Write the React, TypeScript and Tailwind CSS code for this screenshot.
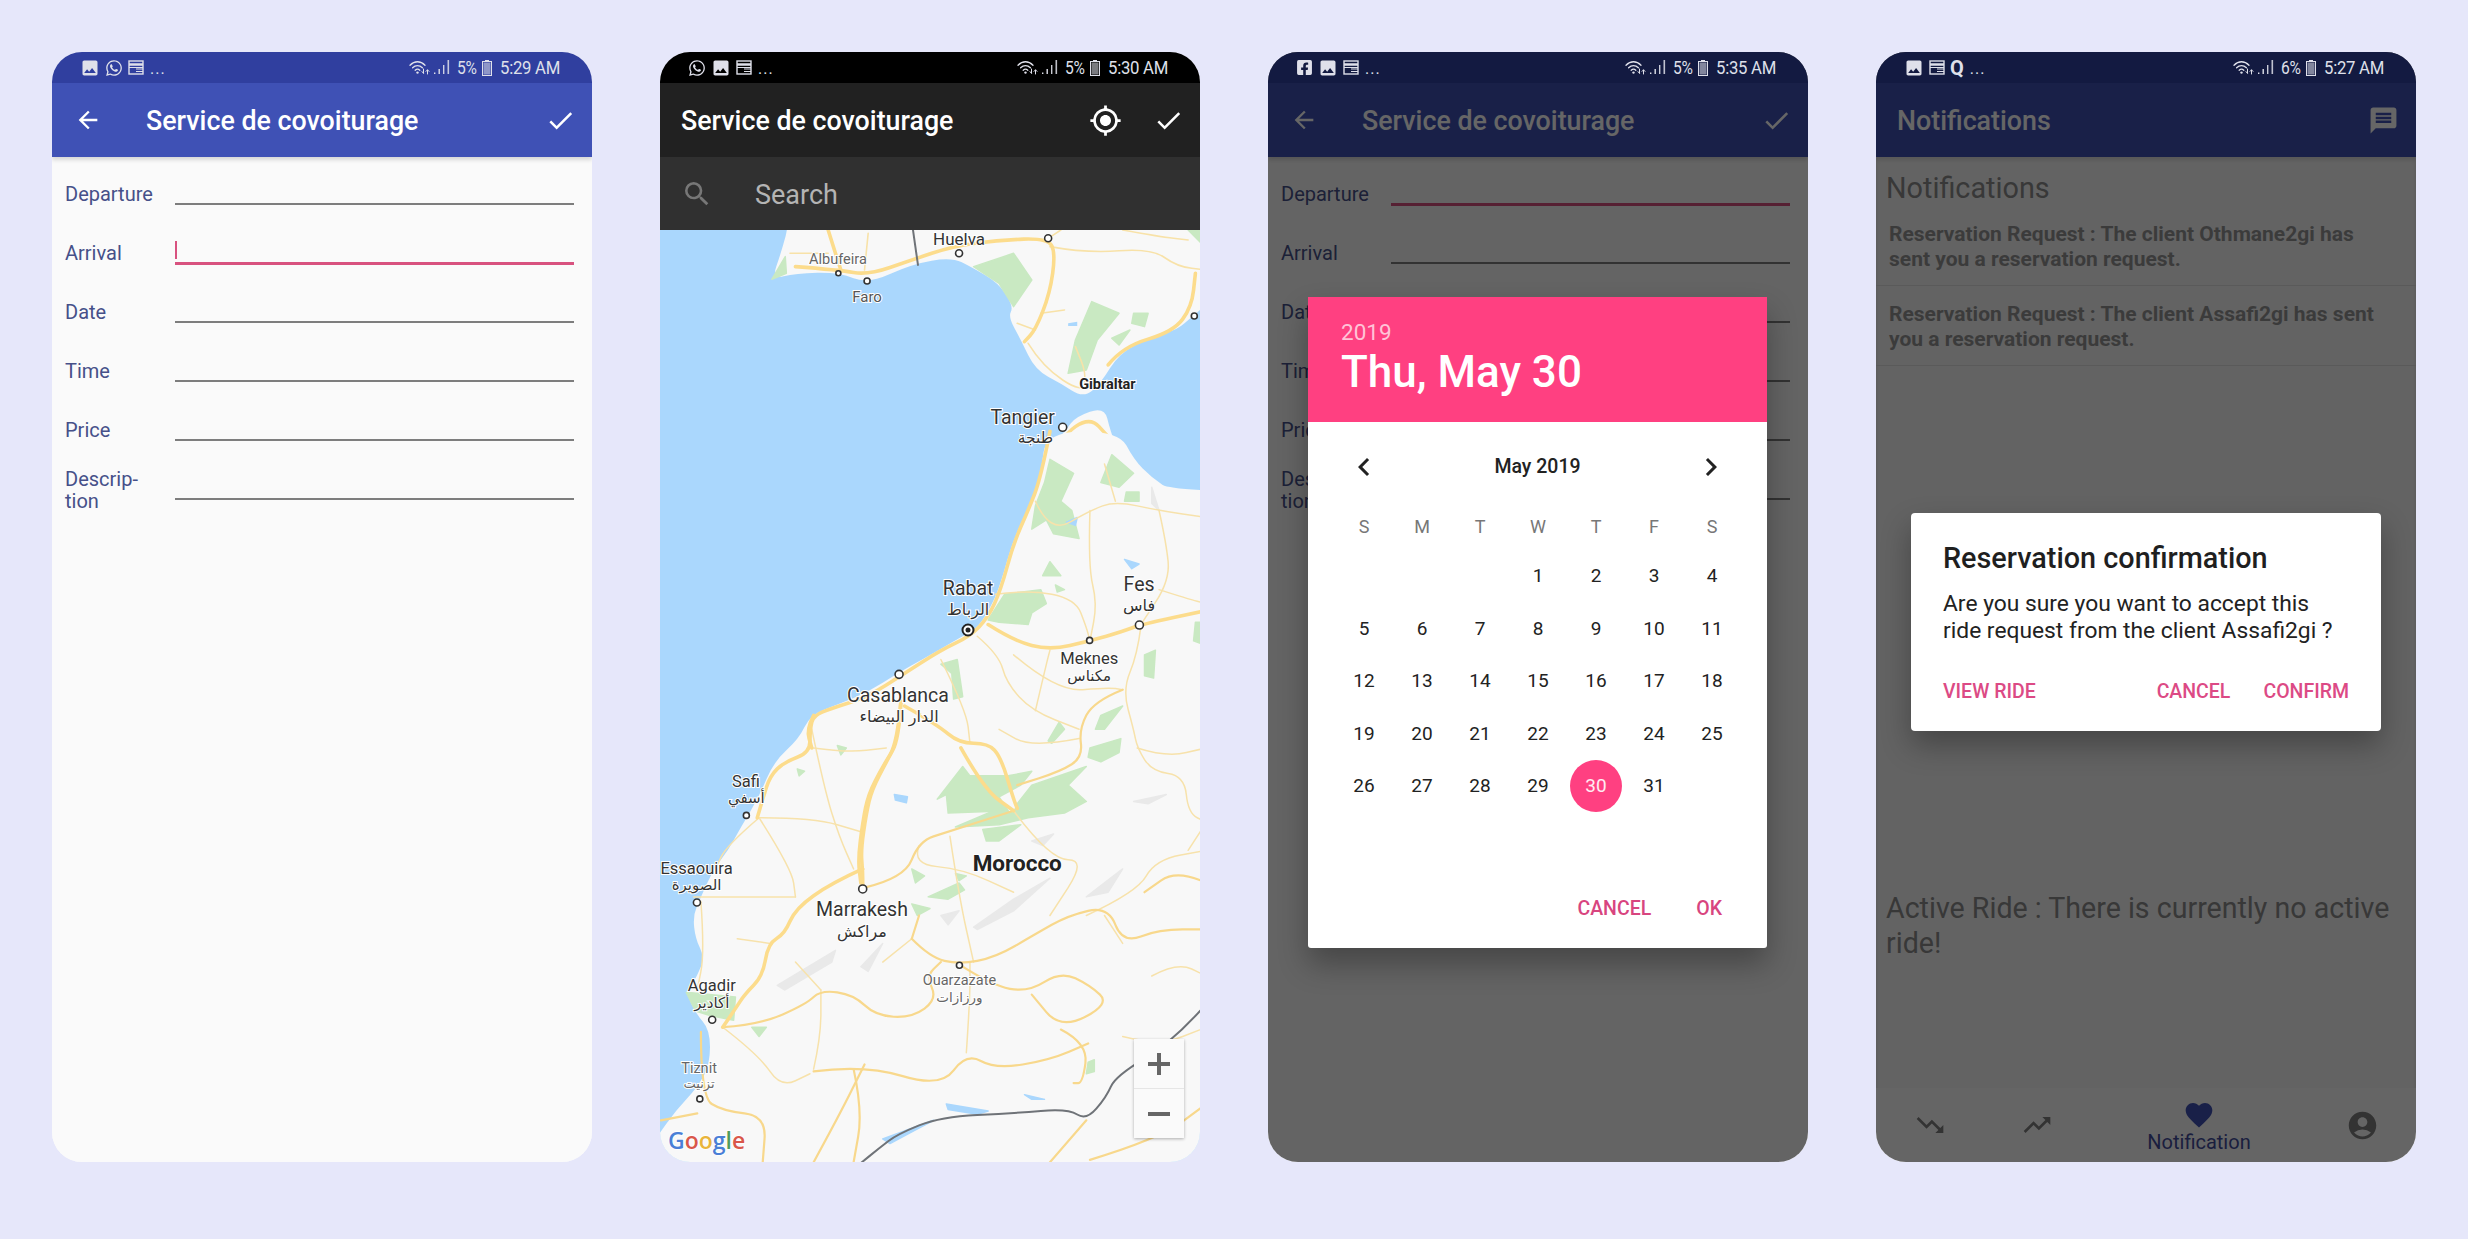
import type { ReactNode } from "react";
import {
  MdAccountCircle,
  MdArrowBack,
  MdChevronLeft,
  MdChevronRight,
  MdDone,
  MdFavorite,
  MdGpsFixed,
  MdImage,
  MdMessage,
  MdSearch,
  MdTrendingDown,
  MdTrendingUp,
} from "react-icons/md";
import { FaFacebookSquare, FaWhatsapp } from "react-icons/fa";

// status bar glyphs
function WebIcon() {
  return (
    <svg width="16" height="15" viewBox="0 0 16 15" fill="none" stroke="currentColor">
      <rect x="1" y="1" width="14" height="13" strokeWidth="1.4" />
      <path d="M1 4.5h14" strokeWidth="2.4" />
      <path d="M8 9h7M8 11.5h7M1 7.5h14" strokeWidth="1" />
    </svg>
  );
}

function WifiIcon() {
  return (
    <svg width="22" height="16" viewBox="0 0 22 16" fill="none" stroke="currentColor" strokeWidth="1.3" strokeLinecap="round">
      <path d="M1 5.2C5.5 .6 11.5 .6 16 5.2" />
      <path d="M3.6 7.8C6.6 4.8 10.4 4.8 13.4 7.8" />
      <path d="M6.2 10.2C7.8 8.8 9.2 8.8 10.8 10.2" />
      <circle cx="8.5" cy="12.6" r="1.2" fill="currentColor" stroke="none" />
      <path d="M14.5 9v4M13 11.6l1.5 1.8M18.5 14V10M17 11.4l1.5-1.6 1.5 1.6" strokeWidth="1" />
    </svg>
  );
}

function SignalIcon() {
  return (
    <svg width="16" height="15" viewBox="0 0 16 15" fill="currentColor">
      <rect x="0" y="12.5" width="1.4" height="1.5" />
      <rect x="4.5" y="9" width="1.4" height="5" />
      <rect x="9" y="5" width="1.4" height="9" opacity="0.9" />
      <rect x="13.5" y="0" width="1.6" height="14" opacity="0.85" />
    </svg>
  );
}

function BatteryIcon() {
  return (
    <svg width="10" height="16" viewBox="0 0 10 16" fill="currentColor">
      <rect x="3" y="0" width="4" height="2" />
      <rect x="0.5" y="1.5" width="9" height="14" fill="none" stroke="currentColor" />
      <rect x="1.5" y="2.5" width="7" height="12" opacity="0.55" />
    </svg>
  );
}

function StatusBar({
  bg,
  icons,
  pct,
  time,
}: {
  bg: string;
  icons: ReactNode[];
  pct: string;
  time: string;
}) {
  return (
    <div className={`relative z-30 h-[31px] shrink-0 flex items-center justify-between pl-[28px] pr-[32px] text-[#dfe0ea] ${bg}`}>
      <div className="flex items-center gap-[5px]">
        {icons.map((icon, i) => (
          <span key={i} className="flex items-center">
            {icon}
          </span>
        ))}
        <span className="text-[16px] leading-none ml-[1px] mt-[3px] tracking-[1px]">...</span>
      </div>
      <div className="flex items-center text-[19px] leading-none tracking-[-0.3px]">
        <WifiIcon />
        <span className="ml-[3px]">
          <SignalIcon />
        </span>
        <span className="ml-[7px] w-[20px] scale-x-[0.82] origin-left whitespace-nowrap">{pct}</span>
        <span className="ml-[5px] mr-[8px]">
          <BatteryIcon />
        </span>
        <span className="w-[60px] scale-x-[0.88] origin-left whitespace-nowrap">{time}</span>
      </div>
    </div>
  );
}

const imageIcon = <MdImage size={20} />;
const webIcon = <WebIcon />;
const whatsappIcon = <FaWhatsapp size={18} />;

function ServiceAppBar() {
  return (
    <div className="h-[74px] shrink-0 flex items-center bg-[#3f51b5] text-white pl-[22px] pr-[16px] shadow-[0_3px_4px_rgba(0,0,0,0.14)] relative z-10">
      <MdArrowBack size={28} />
      <div className="ml-[44px] flex-1 text-[26.8px] leading-none font-medium pt-[3px]">Service de covoiturage</div>
      <MdDone size={31} />
    </div>
  );
}

const fields = ["Departure", "Arrival", "Date", "Time", "Price", "Descrip-\ntion"];

function RideForm({ active, cursor }: { active: number; cursor?: boolean }) {
  return (
    <div className="flex-1 bg-[#fafafa] flex flex-col gap-[11px] pl-[13px] pr-[18px]">
      {fields.map((label, i) => (
        <div key={label} className="h-[48px] flex items-end">
          <div
            className={`w-[110px] shrink-0 text-[20px] leading-[22px] text-[#465089] whitespace-pre-line ${
              i === 5 ? "-mb-[12px]" : ""
            }`}
          >
            {label}
          </div>
          <div
            className={`flex-1 ${
              i === active ? "border-b-[3px] border-[#d8527f] -mb-[1px]" : "border-b-2 border-[#7d7d7d]"
            }`}
          >
            {cursor && i === active && <div className="w-[2px] h-[18px] mb-[3px] bg-[#d8527f]" />}
          </div>
        </div>
      ))}
    </div>
  );
}

// rounds a traced polyline through the midpoints of its segments
function smooth(d: string, closed = false) {
  const pts = d
    .replace(/[MLZ]/g, " ")
    .trim()
    .split(/\s+/)
    .map((p) => p.split(",").map(Number));
  const mid = (a: number[], b: number[]) => `${(a[0] + b[0]) / 2},${(a[1] + b[1]) / 2}`;
  if (closed) {
    let out = `M${mid(pts[pts.length - 1], pts[0])}`;
    pts.forEach((p, i) => {
      out += ` Q${p[0]},${p[1]} ${mid(p, pts[(i + 1) % pts.length])}`;
    });
    return out + " Z";
  }
  let out = `M${pts[0][0]},${pts[0][1]}`;
  for (let i = 1; i < pts.length - 1; i++) {
    out += ` Q${pts[i][0]},${pts[i][1]} ${mid(pts[i], pts[i + 1])}`;
  }
  const last = pts[pts.length - 1];
  return `${out} L${last[0]},${last[1]}`;
}

// map drawing, traced in the coordinates of two crops of the reference
const north = "translate(-10,-190) scale(0.3636,0.3333)";
const south = "translate(-10,220) scale(0.3636,0.4655)";

const landNorth = [
  "M385,200 L385,540 L360,640 L335,718 L400,700 L520,697 L600,732 L720,672 L830,652 L885,682 L960,730 L1000,800 L985,830 L1020,900 L1060,990 L1130,1030 L1192,1074 L1240,1030 L1290,940 L1380,890 L1450,870 L1490,830 L1700,640 L1900,200 Z",
  "M1085,1290 L1110,1210 L1145,1170 L1170,1130 L1250,1100 L1265,1170 L1305,1290 Z",
];
const greenNorth = [
  "M890,680 L1000,640 L1050,720 L1000,800 L960,730 Z",
  "M1215,785 L1290,820 L1230,900 L1200,990 L1150,1000 L1170,900 Z",
  "M1330,820 L1370,820 L1360,860 L1325,850 Z",
  "M1270,895 L1320,870 L1290,915 Z",
  "M335,718 L372,650 L375,700 Z",
  "M1190,1180 L1230,1230 L1190,1235 Z",
  "M1480,570 L1530,570 L1530,625 Z",
];
const bigNorth = [
  "M400,680 L520,690 L600,705 L720,660 L830,620 L960,600 L1095,595 L1115,640 L1100,760 L1060,870 L1030,905",
  "M490,570 L510,640 L525,690",
  "M1260,975 L1300,920 L1440,875 L1490,800 L1500,700",
  "M1090,1290 L1130,1190 L1210,1130 L1260,1190",
];
const thinNorth = [
  "M1010,850 L1060,870",
  "M1100,620 L1200,640 L1380,625 L1450,680 L1530,690",
  "M1040,910 L1080,980 L1190,1060 L1200,1000 L1170,920",
  "M1075,820 L1140,810",
  "M1150,1190 L1200,1240 L1270,1215",
  "M600,580 L590,690",
  "M385,640 L490,640",
  "M1130,570 L1095,595",
  "M1300,570 L1400,590 L1480,600",
];

const landSouth =
  "M1090,-40 L1075,50 L1050,110 L1000,190 L965,285 L945,325 L905,380 L860,400 L760,445 L680,480 L600,520 L520,545 L440,570 L410,620 L340,670 L300,745 L250,810 L215,860 L175,900 L140,960 L118,1000 L125,1050 L150,1090 L130,1130 L100,1165 L125,1210 L165,1245 L165,1320 L130,1370 L70,1420 L20,1475 L-100,1600 L-100,2400 L2400,2400 L2400,105 L1440,90 L1380,60 L1330,20 L1290,-40 Z";
const greySouth = [
  "M890,1025 L1000,965 L1100,920 L1000,990 L900,1030 Z",
  "M350,1150 L510,1075 L500,1100 L370,1160 Z",
  "M580,1110 L640,1060 L600,1120 Z",
  "M800,1000 L850,990 L820,1020 Z",
  "M1200,960 L1300,900 L1260,950 Z",
  "M1330,755 L1420,740 L1370,760 Z",
  "M1380,80 L1400,130 L1380,115 Z",
  "M1050,840 L1110,825 L1080,850 Z",
];
const greenSouth = [
  "M1100,20 L1165,50 L1130,110 L1160,130 L1180,190 L1110,180 L1090,150 L1050,170 L1060,120 L1085,70 Z",
  "M1270,10 L1330,50 L1290,80 L1240,70 Z",
  "M1310,90 L1345,90 L1345,110 L1305,110 Z",
  "M1080,270 L1100,240 L1130,270 Z",
  "M1115,290 L1140,300 L1120,305 Z",
  "M930,365 L975,310 L1075,300 L1090,330 L1050,350 L1040,375 L960,370 Z",
  "M800,460 L845,450 L860,530 L835,535 L830,480 Z",
  "M1095,625 L1125,585 L1140,600 L1105,630 Z",
  "M1240,570 L1300,550 L1250,600 L1225,600 Z",
  "M1210,640 L1295,620 L1290,650 L1240,670 L1205,660 Z",
  "M790,750 L860,680 L880,700 L985,700 L1050,690 L1020,720 L960,745 L985,775 L820,780 L815,740 Z",
  "M840,810 L960,770 L1000,780 L1010,760 L1050,720 L1200,680 L1150,720 L1200,755 L1140,780 L1040,790 L960,805 Z",
  "M915,815 L1020,805 L960,840 L925,840 Z",
  "M765,960 L850,930 L865,945 L820,965 Z",
  "M720,900 L755,915 L730,930 Z",
  "M840,910 L870,915 L850,925 Z",
  "M100,1165 L235,1175 L230,1225 L165,1215 L125,1205 Z",
  "M280,1240 L320,1240 L300,1260 Z",
  "M1205,1315 L1222,1310 L1222,1335 L1200,1340 Z",
  "M1360,440 L1390,430 L1385,490 L1360,485 Z",
  "M1500,370 L1530,370 L1530,420 L1495,410 Z",
  "M515,635 L540,640 L525,655 Z",
  "M405,685 L425,690 L410,700 Z",
  "M720,975 L770,985 L735,1000 Z",
];
const waterSouth = [
  "M672,740 L708,745 L705,758 L675,752 Z",
  "M815,1405 L930,1420 L900,1427 L820,1417 Z",
  "M1305,235 L1345,245 L1325,255 Z",
  "M1145,155 L1175,145 L1170,162 Z",
  "M1030,1385 L1085,1395 L1050,1395 Z",
  "M640,1480 L780,1440 L720,1465 L660,1490 Z",
];
const thinSouth = [
  "M1210,130 L1205,250 L1230,330 L1210,410",
  "M1060,110 L1100,180 L1210,130 L1280,110 L1400,130 L1530,145",
  "M1250,30 L1280,110",
  "M1400,130 L1420,200 L1430,280 L1350,375",
  "M950,310 L1040,300 L1170,320 L1200,380 L1210,410",
  "M1350,380 L1340,440 L1300,515 L1330,600 L1340,640 L1380,690 L1470,700 L1480,780 L1530,800",
  "M900,400 L960,440 L980,500 L1050,560 L1180,600",
  "M800,450 L870,560 L880,630",
  "M445,600 L480,730 L520,830 L560,900",
  "M300,790 L450,790 L580,820",
  "M300,790 L390,900 L400,960",
  "M300,790 L210,850 L180,900",
  "M120,960 L240,960 L400,960",
  "M140,970 L150,1080 L130,1160",
  "M825,830 L850,960 L890,1100",
  "M1000,775 L1100,880 L1200,880 L1100,1000",
  "M1200,1000 L1340,950 L1390,880 L1530,860",
  "M1530,800 L1480,860",
  "M1300,1060 L1250,1000",
  "M450,1330 L470,1260 L470,1160",
  "M200,1240 L300,1300 L360,1370 L440,1340",
  "M740,850 L720,890 L860,900 L1000,950",
  "M1180,620 L1050,640 L960,600",
  "M1060,560 L1090,460 L1100,430",
  "M450,640 L540,650 L650,640",
  "M870,1295 L880,1180 L880,1100",
  "M1000,440 L1120,520 L1260,510 L1300,515",
  "M1400,300 L1480,320 L1530,330",
  "M1340,640 L1420,660 L1530,640",
  "M240,1050 L330,1060",
  "M400,1100 L470,1160",
  "M640,1100 L720,1050",
  "M1380,1130 L1450,1100 L1530,1130",
  "M1300,1260 L1400,1280 L1530,1240",
];
const midSouth = [
  "M720,1050 L770,1090 L850,1105 L950,1090 L1060,1040 L1150,1000 L1260,980 L1300,1060 L1400,1030 L1530,1030",
  "M740,1000 L720,1050",
  "M590,940 L700,920 L740,840 L820,820 L1000,775",
  "M200,1240 L300,1235 L430,1190 L470,1160 L560,1170 L620,1215 L720,1220 L790,1180 L760,1130 L800,1100",
  "M850,1105 L940,1150 L1040,1165 L1130,1120 L1210,1150 L1265,1190 L1130,1245 L1050,1170",
  "M1130,1245 L1205,1275 L1190,1360 L1165,1360",
  "M450,1335 L590,1320 L800,1370 L870,1295 L950,1330 L1100,1310 L1205,1275",
  "M1300,515 L1220,540 L1180,600 L1190,660 L1130,690 L1010,720",
  "M140,1250 L140,1390 L200,1420 L320,1430 L310,1530",
  "M30,1440 L130,1425",
  "M560,1330 L585,1420 L560,1530",
  "M1210,1525 L1400,1480 L1530,1405",
  "M1100,1530 L1200,1440",
  "M1530,930 L1450,900 L1360,950",
  "M450,1530 L520,1430 L590,1320",
];
const bigSouth = [
  "M1100,-40 L1075,60 L1040,130 L1000,200 L965,300 L930,360 L880,400 L800,430 L700,480 L600,530 L500,555 L450,570 L440,600 L440,650 L370,670 L330,700 L310,750 L295,790",
  "M690,540 L685,620 L650,670 L610,730 L595,780 L580,860 L585,905 L585,940",
  "M690,540 L680,630 L640,680 L600,740 L585,800 L572,880 L580,930",
  "M585,900 L500,930 L400,985 L370,1040 L325,1060 L310,1130 L260,1170 L235,1200 L200,1240",
  "M930,375 L1000,410 L1100,430 L1210,410 L1300,390 L1350,375 L1530,345",
  "M700,550 L790,590 L850,630 L930,630 L965,660 L1000,750 L1010,770",
  "M855,640 L920,730 L1000,775",
  "M450,570 L430,600 L445,640",
];

type Pin = [number, number, number];
const pinsNorth: Pin[] = [
  [850, 640, 3.5],
  [1095, 595, 3.5],
  [518, 700, 2.5],
  [597, 723, 3],
  [1497, 828, 3],
  [1135, 1162, 4],
];
const pinsSouth: Pin[] = [
  [1346, 376, 4],
  [1209, 409, 3],
  [685, 482, 4],
  [265, 785, 3],
  [129, 972, 3.5],
  [585, 943, 4],
  [851, 1107, 3],
  [171, 1224, 3.5],
  [137, 1394, 3],
];

type Place = [string, number, number, number, string?, boolean?];
const labelsNorth: Place[] = [
  ["Huelva", 850, 598, 17],
  ["Albufeira", 517, 660, 14.5, "#666"],
  ["Faro", 597, 772, 15, "#555"],
  ["Gibraltar", 1258, 1033, 14.5, "#222", true],
  ["Tangier", 1025, 1133, 19.5],
  ["طنجة", 1060, 1195, 15.5],
];
const labelsSouth: Place[] = [
  ["Rabat", 875, 298, 19.5],
  ["الرباط", 875, 342, 16],
  ["Fes", 1345, 290, 19.5],
  ["فاس", 1345, 335, 16],
  ["Meknes", 1208, 448, 16.5],
  ["مكناس", 1208, 485, 15],
  ["Casablanca", 682, 528, 19.5],
  ["الدار البيضاء", 685, 572, 16],
  ["Safi", 264, 712, 16.5],
  ["أسفي", 265, 748, 15],
  ["Essaouira", 128, 898, 16.5],
  ["الصويرة", 128, 935, 15],
  ["Marrakesh", 583, 988, 19.5],
  ["مراكش", 583, 1035, 16],
  ["Morocco", 1010, 887, 22.5, "#222", true],
  ["Ouarzazate", 851, 1140, 14.5, "#666"],
  ["ورزازات", 851, 1175, 13.5, "#666"],
  ["Agadir", 170, 1150, 16.5],
  ["أكادير", 170, 1187, 15],
  ["Tiznit", 135, 1328, 14.5, "#666"],
  ["تزنيت", 135, 1360, 13, "#666"],
];

function Shapes({ items, fill }: { items: string[]; fill: string }) {
  return (
    <>
      {items.map((d) => (
        <path key={d} d={d} fill={fill} stroke={fill} strokeWidth="1.5" strokeLinejoin="round" vectorEffect="non-scaling-stroke" />
      ))}
    </>
  );
}

function Lines({ items, color, width }: { items: string[]; color: string; width: number }) {
  return (
    <>
      {items.map((d) => (
        <path
          key={d}
          d={smooth(d)}
          fill="none"
          stroke={color}
          strokeWidth={width}
          strokeLinejoin="round"
          strokeLinecap="round"
          vectorEffect="non-scaling-stroke"
        />
      ))}
    </>
  );
}

function Pins({ items, sx, sy, dx, dy }: { items: Pin[]; sx: number; sy: number; dx: number; dy: number }) {
  return (
    <>
      {items.map(([x, y, r]) => (
        <circle key={`${x}-${y}`} cx={x * sx + dx} cy={y * sy + dy} r={r} fill="#fff" stroke="#333" strokeWidth="1.6" />
      ))}
    </>
  );
}

function Labels({ items, sx, sy, dx, dy }: { items: Place[]; sx: number; sy: number; dx: number; dy: number }) {
  return (
    <>
      {items.map(([text, x, y, size, color, bold]) => (
        <text
          key={text}
          x={x * sx + dx}
          y={y * sy + dy}
          fontSize={size}
          fill={color ?? "#333"}
          fontWeight={bold ? 700 : 400}
          textAnchor="middle"
          dominantBaseline="central"
          stroke="#fff"
          strokeWidth="2"
          paintOrder="stroke"
          className="font-['Roboto','DejaVu_Sans',sans-serif]"
        >
          {text}
        </text>
      ))}
    </>
  );
}

function MapView() {
  return (
    <div className="relative flex-1 bg-[#aad7fd] overflow-hidden">
      <svg width="540" height="932" viewBox="0 0 540 932" className="block">
        <g transform={north}>
          {landNorth.map((d) => (
            <path key={d} d={smooth(d, true)} fill="#f8f8f8" />
          ))}
          <Shapes items={greenNorth} fill="#c9e9c2" />
          <path d="M1150,850 L1175,845 L1175,858 L1150,858 Z" fill="#aad7fd" />
          <Lines items={thinNorth} color="#f8e2a8" width={1.6} />
          <Lines items={bigNorth} color="#fcdc8c" width={3.6} />
          <Lines items={["M722,560 L737,675"]} color="#6f7378" width={2} />
        </g>
        <g transform={south}>
          <path d={smooth(landSouth, true)} fill="#f8f8f8" />
          <Shapes items={greySouth} fill="#e9e9e9" />
          <Shapes items={greenSouth} fill="#c9e9c2" />
          <Shapes items={waterSouth} fill="#aad7fd" />
          <Lines items={thinSouth} color="#f7e2ab" width={1.5} />
          <Lines items={midSouth} color="#f8d88c" width={2.2} />
          <Lines items={bigSouth} color="#fcdc8c" width={3.6} />
          <Lines
            items={["M1530,1190 L1440,1270 L1280,1345 L1255,1390 L1200,1440 L1150,1415 L1000,1425 L800,1432 L680,1470 L630,1500 L575,1535"]}
            color="#6f7378"
            width={2}
          />
        </g>
        <Pins items={pinsNorth} sx={0.3636} sy={0.3333} dx={-10} dy={-190} />
        <Pins items={pinsSouth} sx={0.3636} sy={0.4655} dx={-10} dy={220} />
        <circle cx={308} cy={400} r={5.5} fill="#fff" stroke="#222" strokeWidth="2" />
        <circle cx={308} cy={400} r={2.5} fill="#222" />
        <Labels items={labelsNorth} sx={0.3636} sy={0.3333} dx={-10} dy={-190} />
        <Labels items={labelsSouth} sx={0.3636} sy={0.4655} dx={-10} dy={220} />
        <text x={8} y={919} fontSize={23} fontWeight={600} className="font-['Open_Sans',sans-serif]" stroke="#fff" strokeWidth="1.5" paintOrder="stroke">
          <tspan fill="#4a7fd6">G</tspan>
          <tspan fill="#d9574a">o</tspan>
          <tspan fill="#e9b53c">o</tspan>
          <tspan fill="#4a7fd6">g</tspan>
          <tspan fill="#4f9d5b">l</tspan>
          <tspan fill="#d9574a">e</tspan>
        </text>
      </svg>
      <div className="absolute left-[474px] top-[809px] w-[50px] h-[99px] bg-[#fafafa] shadow-[0_1px_3px_rgba(0,0,0,0.3)] flex flex-col">
        <div className="flex-1 flex items-center justify-center border-b border-[#e6e6e6] text-[#666]">
          <svg width="22" height="22" viewBox="0 0 22 22" fill="currentColor">
            <path d="M9 0h4v9h9v4h-9v9H9v-9H0V9h9z" />
          </svg>
        </div>
        <div className="flex-1 flex items-center justify-center">
          <div className="w-[22px] h-[4px] bg-[#666]" />
        </div>
      </div>
    </div>
  );
}

const weekdays = ["S", "M", "T", "W", "T", "F", "S"];
const days: (number | null)[] = [null, null, null, ...Array.from({ length: 31 }, (_, i) => i + 1)];

function DatePicker() {
  return (
    <div className="absolute inset-0 z-20 bg-black/60 flex justify-start items-start pl-[40px] pt-[245px]">
      <div className="w-[459px] h-[651px] bg-white rounded-b-[3px] flex flex-col shadow-[0_16px_30px_rgba(0,0,0,0.3)]">
        <div className="h-[125px] bg-[#ff4081] pl-[33px] pt-[20px] text-white">
          <div className="text-[22.5px] leading-[30px] text-white/70">2019</div>
          <div className="text-[44px] leading-[50px] font-medium">Thu, May 30</div>
        </div>
        <div className="h-[88px] flex items-center justify-between pl-[38px] pr-[38px] pt-[1px] text-[#222]">
          <MdChevronLeft size={36} />
          <div className="text-[19.5px] font-medium">May 2019</div>
          <MdChevronRight size={36} />
        </div>
        <div className="pl-[27px]">
          <div className="grid grid-cols-[repeat(7,58px)] h-[34px] items-center text-center text-[18px] text-[#777] mb-[7px] -mt-[1px]">
            {weekdays.map((d, i) => (
              <div key={i}>{d}</div>
            ))}
          </div>
          <div className="grid grid-cols-[repeat(7,58px)] auto-rows-[52.5px] items-center justify-items-center text-[19px] text-[#222] mt-[2px]">
            {days.map((d, i) => (
              <div
                key={i}
                className={`w-[52px] h-[52px] rounded-full flex items-center justify-center ${
                  d === 30 ? "bg-[#ff4081] text-white/90" : ""
                }`}
              >
                {d}
              </div>
            ))}
          </div>
        </div>
        <div className="mt-auto h-[80px] flex items-center justify-end gap-[45px] pr-[45px] pt-[2px] text-[19.5px] font-medium text-[#d8457f]">
          <span>CANCEL</span>
          <span>OK</span>
        </div>
      </div>
    </div>
  );
}

const notifications = [
  "Reservation Request : The client Othmane2gi has sent you a reservation request.",
  "Reservation Request : The client Assafi2gi has sent you a reservation request.",
];

function ConfirmDialog() {
  return (
    <div className="absolute inset-0 z-20 bg-black/60 flex justify-center items-start pt-[461px]">
      <div className="w-[470px] h-[218px] bg-white rounded-[4px] pl-[32px] pr-[32px] pt-[27px] shadow-[0_14px_30px_rgba(0,0,0,0.3)]">
        <div className="text-[28.8px] leading-[36px] font-medium text-[#1f1f1f]">Reservation confirmation</div>
        <div className="mt-[14px] text-[22.8px] leading-[27px] text-[#222]">
          Are you sure you want to accept this
          <br />
          ride request from the client Assafi2gi ?
        </div>
        <div className="mt-[36px] flex text-[19.5px] leading-[24px] font-medium text-[#dc4a85]">
          <span>VIEW RIDE</span>
          <span className="ml-auto">CANCEL</span>
          <span className="ml-[33px]">CONFIRM</span>
        </div>
      </div>
    </div>
  );
}

function Phone({ children }: { children: ReactNode }) {
  return (
    <div className="relative w-[540px] h-[1110px] shrink-0 rounded-[30px] overflow-hidden flex flex-col bg-[#fafafa]">
      {children}
    </div>
  );
}

export default function App() {
  return (
    <div className="w-[2468px] h-[1239px] bg-[#e6e7fa] flex gap-[68px] pl-[52px] pt-[52px] font-['Roboto',sans-serif]">
      <Phone>
        <StatusBar bg="bg-[#303f9f]" icons={[imageIcon, whatsappIcon, webIcon]} pct="5%" time="5:29 AM" />
        <ServiceAppBar />
        <RideForm active={1} cursor />
      </Phone>

      <Phone>
        <StatusBar bg="bg-black" icons={[whatsappIcon, imageIcon, webIcon]} pct="5%" time="5:30 AM" />
        <div className="h-[74px] shrink-0 flex items-center bg-[#212121] text-white pl-[21px] pr-[16px]">
          <div className="flex-1 text-[26.8px] leading-none font-medium pt-[3px]">Service de covoiturage</div>
          <MdGpsFixed size={33} />
          <span className="ml-[31px]">
            <MdDone size={31} />
          </span>
        </div>
        <div className="h-[73px] shrink-0 flex items-center bg-[#303030] pl-[21px]">
          <MdSearch size={32} className="text-[#777]" />
          <span className="ml-[42px] pt-[3px] text-[27px] text-[#b4b4b4]">Search</span>
        </div>
        <MapView />
      </Phone>

      <Phone>
        <StatusBar bg="bg-[#131a41]" icons={[<FaFacebookSquare size={17} />, imageIcon, webIcon]} pct="5%" time="5:35 AM" />
        <ServiceAppBar />
        <RideForm active={0} />
        <DatePicker />
      </Phone>

      <Phone>
        <StatusBar bg="bg-[#131a41]" icons={[imageIcon, webIcon, <span className="text-[20px] leading-none font-bold">Q</span>]} pct="6%" time="5:27 AM" />
        <div className="h-[74px] shrink-0 flex items-center justify-between bg-[#3f51b5] text-white pl-[21px] pr-[17px]">
          <div className="text-[26.8px] leading-none font-medium pt-[3px]">Notifications</div>
          <MdMessage size={31} />
        </div>
        <div className="flex-1 flex flex-col bg-[#f8f8f8] shadow-[inset_0_3px_4px_rgba(0,0,0,0.12)]">
          <div className="pl-[10px] pt-[13px] text-[28.8px] leading-[36px] text-[#8c8c8c]">Notifications</div>
          {notifications.map((text) => (
            <div key={text} className="pl-[13px] pr-[27px] pt-[16px] pb-[13px] border-b border-[#e2e2e2] text-[21px] leading-[25px] font-bold text-[#959595]">
              {text}
            </div>
          ))}
          <div className="mt-auto mb-[127px] pl-[10px] pr-[10px] text-[28.6px] leading-[35px] text-[#8c8c8c]">
            Active Ride : There is currently no active ride!
          </div>
          <div className="h-[74px] shrink-0 flex bg-[#fdfdfd] text-[#808080]">
            <div className="w-[107px] flex items-center justify-center">
              <MdTrendingDown size={32} />
            </div>
            <div className="w-[107px] flex items-center justify-center">
              <MdTrendingUp size={32} />
            </div>
            <div className="flex-1 flex flex-col items-center pt-[11px] text-[#3f51b5]">
              <MdFavorite size={32} />
              <span className="text-[20px] leading-[24px] -mt-[1px] text-[#434d9c]">Notification</span>
            </div>
            <div className="w-[108px] flex items-center justify-center">
              <MdAccountCircle size={33} />
            </div>
          </div>
        </div>
        <ConfirmDialog />
      </Phone>
    </div>
  );
}
